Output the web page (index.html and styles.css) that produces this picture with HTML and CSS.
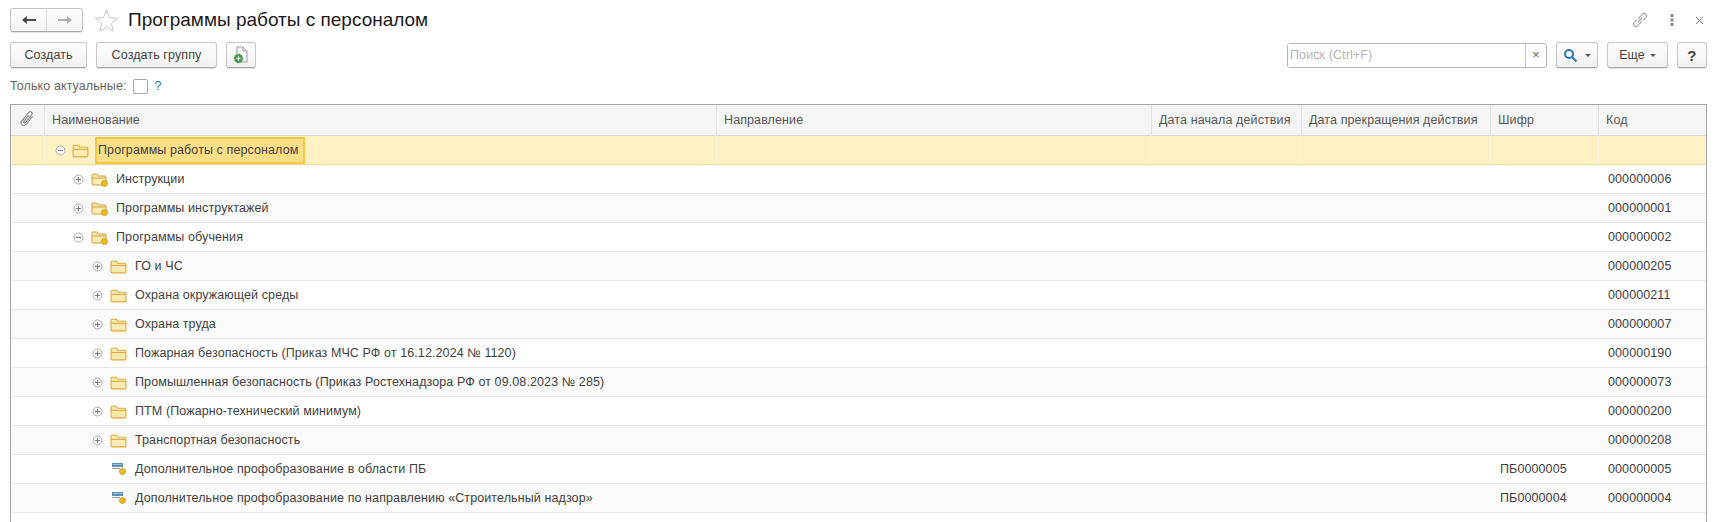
FILE: index.html
```html
<!DOCTYPE html>
<html lang="ru">
<head>
  <meta charset="UTF-8" />
  <title>Программы работы с персоналом</title>
  <link rel="stylesheet" href="styles.css">
</head>
<body>

  <svg class="defs" width="0" height="0">
    <symbol id="plus" viewBox="0 0 11 11">
      <circle cx="5.5" cy="5.5" r="4.5" fill="#fff" stroke="#a8a8a8"/>
      <path d="M3 5.5h5M5.5 3v5" stroke="#777" fill="none"/>
    </symbol>
    <symbol id="minus" viewBox="0 0 11 11">
      <circle cx="5.5" cy="5.5" r="4.5" fill="#fff" stroke="#a8a8a8"/>
      <path d="M3 5.5h5" stroke="#777" fill="none"/>
    </symbol>
    <symbol id="folder" viewBox="0 0 16 14">
      <path d="M1 12V3q0-1 1-1h4l1.5 2H14q1 0 1 1v7q0 1-1 1H2q-1 0-1-1z" fill="#fdeab0" stroke="#dba93c"/>
      <path d="M1 6h14" stroke="#dba93c"/>
    </symbol>
    <symbol id="folder-dot" viewBox="0 0 17 15">
      <path d="M1 12V3q0-1 1-1h4l1.5 2H14q1 0 1 1v7q0 1-1 1H2q-1 0-1-1z" fill="#fdeab0" stroke="#c9a040"/>
      <path d="M1 6h14" stroke="#c9a040"/>
      <circle cx="13.5" cy="11.5" r="3" fill="#eebb1f" stroke="#b98f1c" stroke-width=".7"/>
    </symbol>
    <symbol id="item" viewBox="0 0 14 14">
      <rect x="0" y="1" width="11" height="4" fill="#5f8fb5"/>
      <rect x="1" y="2" width="9" height="1" fill="#9dc0da"/>
      <path d="M0 6.5h8" stroke="#999"/>
      <circle cx="10.5" cy="9.5" r="3" fill="#eebb1f" stroke="#b98f1c" stroke-width=".7"/>
    </symbol>
  </svg>

  <div class="title-bar">
    <div class="nav-btns">
      <button type="button" class="nav-btn">
        <svg width="16" height="10" viewBox="0 0 16 10"><path d="M1 5l5-4v3h9v2H6v3z" fill="#4a4a4a"/></svg>
      </button>
      <button type="button" class="nav-btn">
        <svg width="16" height="10" viewBox="0 0 16 10"><path d="M15 5l-5-4v3H1v2h9v3z" fill="#b0b0b0"/></svg>
      </button>
    </div>
    <svg class="star" width="25" height="25" viewBox="0 0 25 25"><path d="M12.5 2l3 7.6 8 .6-6.200 5.100 2 8L12.500 19l-6.800 4.300 2-8L1.500 10.200l8-.6z" fill="#fff" stroke="#c9c9c9"/></svg>
    <h1>Программы работы с персоналом</h1>
    <div class="window-icons">
      <svg width="18" height="18" viewBox="0 0 18 18" fill="none" stroke="#8a8a8a" stroke-width="1"><path d="M7 11l4-4M6 8.500l-3 3a2.500 2.500 0 0 0 3.500 3.500l3-3a2.500 2.500 0 0 0 .5-2.500M12 9.500l3-3A2.500 2.500 0 0 0 11.500 3l-3 3a2.500 2.500 0 0 0-.5 2.500"/></svg>
      <svg width="4" height="14" viewBox="0 0 4 14" fill="#888"><rect x="0.500" y="1" width="3" height="3"/><rect x="0.500" y="5.500" width="3" height="3"/><rect x="0.500" y="10" width="3" height="3"/></svg>
      <svg width="9" height="9" viewBox="0 0 9 9" stroke="#777" fill="none"><path d="M1 1l7 7M8 1l-7 7"/></svg>
    </div>
  </div>

  <div class="command-bar">
    <button type="button" class="btn btn-create">Создать</button>
    <button type="button" class="btn btn-group">Создать группу</button>
    <button type="button" class="btn btn-icon">
      <svg width="16" height="18" viewBox="0 0 16 18"><path d="M4 1h6l4 4v11H4z" fill="#fff" stroke="#9a9a9a"/><path d="M10 1v4h4" fill="#e8e8e8" stroke="#9a9a9a"/><circle cx="5.500" cy="12.500" r="4.500" fill="#3f9a4c"/><path d="M3 12.500h5M5.500 10v5" stroke="#fff" stroke-width="1.200"/></svg>
    </button>
    <div class="search">
      <input type="text" placeholder="Поиск (Ctrl+F)" />
      <span class="search-clear">×</span>
    </div>
    <button type="button" class="btn btn-search">
      <svg width="15" height="15" viewBox="0 0 15 15" fill="none" stroke="#2a78ad" stroke-width="2"><circle cx="6" cy="6" r="4"/><path d="M9 9l4.500 4.500"/></svg>
      <span class="caret"></span>
    </button>
    <button type="button" class="btn btn-more">Еще <span class="caret"></span></button>
    <button type="button" class="btn btn-help">?</button>
  </div>

  <div class="filter-bar">
    <label for="actual">Только актуальные:</label>
    <input type="checkbox" id="actual" />
    <span class="hint">?</span>
  </div>

  <div class="list-wrap">
    <table class="list">
      <colgroup>
        <col class="col-attach"><col class="col-name"><col class="col-dir"><col class="col-start"><col class="col-end"><col class="col-cipher"><col class="col-code">
      </colgroup>
      <thead>
        <tr>
          <th class="attach">
            <svg width="15" height="17" viewBox="0 0 15 17" fill="none" stroke="#8c8c8c" stroke-width="1.200"><path d="M12.500 6.500l-6 7.500c-1.500 1.800-3.500 1.900-4.600.9s-1-2.800.3-4.400l6-7.500c1-1.200 2.400-1.500 3.300-.8s.8 2-.2 3.200l-5.600 7c-.6.700-1.300.9-1.700.5s-.4-1-.1-1.500l5-6.300"/></svg>
          </th>
          <th>Наименование</th>
          <th>Направление</th>
          <th>Дата начала действия</th>
          <th>Дата прекращения действия</th>
          <th>Шифр</th>
          <th>Код</th>
        </tr>
      </thead>
      <tbody>
        <tr class="selected">
          <td></td>
          <td><div class="tree lvl0"><svg class="toggle"><use href="#minus"/></svg><svg class="ico-folder"><use href="#folder"/></svg><span class="current">Программы работы с персоналом</span></div></td>
          <td></td><td></td><td></td><td></td><td></td>
        </tr>
        <tr>
          <td></td>
          <td><div class="tree lvl1"><svg class="toggle"><use href="#plus"/></svg><svg class="ico-folder"><use href="#folder-dot"/></svg><span>Инструкции</span></div></td>
          <td></td><td></td><td></td><td></td><td>000000006</td>
        </tr>
        <tr>
          <td></td>
          <td><div class="tree lvl1"><svg class="toggle"><use href="#plus"/></svg><svg class="ico-folder"><use href="#folder-dot"/></svg><span>Программы инструктажей</span></div></td>
          <td></td><td></td><td></td><td></td><td>000000001</td>
        </tr>
        <tr>
          <td></td>
          <td><div class="tree lvl1"><svg class="toggle"><use href="#minus"/></svg><svg class="ico-folder"><use href="#folder-dot"/></svg><span>Программы обучения</span></div></td>
          <td></td><td></td><td></td><td></td><td>000000002</td>
        </tr>
        <tr>
          <td></td>
          <td><div class="tree lvl2"><svg class="toggle"><use href="#plus"/></svg><svg class="ico-folder"><use href="#folder"/></svg><span>ГО и ЧС</span></div></td>
          <td></td><td></td><td></td><td></td><td>000000205</td>
        </tr>
        <tr>
          <td></td>
          <td><div class="tree lvl2"><svg class="toggle"><use href="#plus"/></svg><svg class="ico-folder"><use href="#folder"/></svg><span>Охрана окружающей среды</span></div></td>
          <td></td><td></td><td></td><td></td><td>000000211</td>
        </tr>
        <tr>
          <td></td>
          <td><div class="tree lvl2"><svg class="toggle"><use href="#plus"/></svg><svg class="ico-folder"><use href="#folder"/></svg><span>Охрана труда</span></div></td>
          <td></td><td></td><td></td><td></td><td>000000007</td>
        </tr>
        <tr>
          <td></td>
          <td><div class="tree lvl2"><svg class="toggle"><use href="#plus"/></svg><svg class="ico-folder"><use href="#folder"/></svg><span>Пожарная безопасность (Приказ МЧС РФ от 16.12.2024 № 1120)</span></div></td>
          <td></td><td></td><td></td><td></td><td>000000190</td>
        </tr>
        <tr>
          <td></td>
          <td><div class="tree lvl2"><svg class="toggle"><use href="#plus"/></svg><svg class="ico-folder"><use href="#folder"/></svg><span>Промышленная безопасность (Приказ Ростехнадзора РФ от 09.08.2023 № 285)</span></div></td>
          <td></td><td></td><td></td><td></td><td>000000073</td>
        </tr>
        <tr>
          <td></td>
          <td><div class="tree lvl2"><svg class="toggle"><use href="#plus"/></svg><svg class="ico-folder"><use href="#folder"/></svg><span>ПТМ (Пожарно-технический минимум)</span></div></td>
          <td></td><td></td><td></td><td></td><td>000000200</td>
        </tr>
        <tr>
          <td></td>
          <td><div class="tree lvl2"><svg class="toggle"><use href="#plus"/></svg><svg class="ico-folder"><use href="#folder"/></svg><span>Транспортная безопасность</span></div></td>
          <td></td><td></td><td></td><td></td><td>000000208</td>
        </tr>
        <tr>
          <td></td>
          <td><div class="tree lvl2"><span class="toggle"></span><svg class="ico-item"><use href="#item"/></svg><span>Дополнительное профобразование в области ПБ</span></div></td>
          <td></td><td></td><td></td><td>ПБ0000005</td><td>000000005</td>
        </tr>
        <tr>
          <td></td>
          <td><div class="tree lvl2"><span class="toggle"></span><svg class="ico-item"><use href="#item"/></svg><span>Дополнительное профобразование по направлению «Строительный надзор»</span></div></td>
          <td></td><td></td><td></td><td>ПБ0000004</td><td>000000004</td>
        </tr>
      </tbody>
    </table>
  </div>

</body>
</html>
```

FILE: styles.css
```css
* {
  margin: 0;
  padding: 0;
  box-sizing: border-box;
}

html, body {
  height: 100%;
  overflow: hidden;
}

body {
  display: flex;
  flex-direction: column;
  padding: 0 9px 0 10px;
  font-family: "Liberation Sans", Arial, sans-serif;
  font-size: 12.5px;
  letter-spacing: 0.1px;
  color: #3f3f3f;
  background: #fff;
}

.defs {
  position: absolute;
}

/* title */
.title-bar {
  display: flex;
  align-items: center;
  height: 42px;
  padding-bottom: 2px;
}

.nav-btns {
  display: flex;
  width: 73px;
  height: 24px;
  border: 1px solid #c4c4c4;
  border-bottom-color: #a8a8a8;
  border-radius: 3px;
  background: linear-gradient(#fff, #f2f2f2);
  box-shadow: 0 1px 1px rgba(0,0,0,0.12);
}

.nav-btn {
  flex: 1;
  border: none;
  background: none;
  display: flex;
  align-items: center;
  justify-content: center;
}

.nav-btn + .nav-btn {
  border-left: 1px solid #d8d8d8;
}

.star {
  margin-left: 11px;
}

h1 {
  margin-left: 9px;
  font-size: 19px;
  font-weight: normal;
  letter-spacing: 0;
  color: #1a1a1a;
}

.window-icons {
  margin-left: auto;
  display: flex;
  align-items: center;
  gap: 21px;
  padding-right: 3px;
}

/* commands */
.command-bar {
  display: flex;
  align-items: center;
  height: 26px;
}

.btn {
  height: 26px;
  border: 1px solid #c6c6c6;
  border-bottom-color: #a8a8a8;
  border-radius: 3px;
  background: linear-gradient(#fff, #f1f1f1);
  box-shadow: 0 1px 1px rgba(0,0,0,0.12);
  font: inherit;
  letter-spacing: inherit;
  color: #3f3f3f;
  display: flex;
  align-items: center;
  justify-content: center;
}

.btn-create { width: 77px; }
.btn-group { width: 121px; margin-left: 9px; }
.btn-icon { width: 30px; margin-left: 9px; }
.btn-search { width: 42px; margin-left: 9px; gap: 7px; }
.btn-more { width: 61px; margin-left: 9px; gap: 5px; }
.btn-help { width: 30px; margin-left: 9px; font-size: 15px; font-weight: bold; }

.caret {
  width: 0;
  height: 0;
  border-left: 3px solid transparent;
  border-right: 3px solid transparent;
  border-top: 3px solid #555;
}

.search {
  margin-left: auto;
  display: flex;
  width: 260px;
  height: 25px;
  border: 1px solid #b4b4b4;
  border-radius: 3px;
  background: #fff;
}

.search input {
  flex: 1;
  min-width: 0;
  border: none;
  outline: none;
  padding-left: 2px;
  font: inherit;
  letter-spacing: inherit;
}

.search input::placeholder {
  color: #b5b5b5;
}

.search-clear {
  width: 21px;
  border-left: 1px solid #c8c8c8;
  text-align: center;
  line-height: 22px;
  color: #666;
}

/* filter */
.filter-bar {
  display: flex;
  align-items: center;
  height: 22px;
  margin-top: 7px;
  color: #666;
}

.filter-bar input {
  appearance: none;
  width: 15px;
  height: 15px;
  margin-left: 6px;
  border: 1px solid #a8a8a8;
  border-radius: 2px;
  background: #fff;
}

.hint {
  margin-left: 7px;
  color: #2a78ad;
}

/* list */
.list-wrap {
  flex: 1;
  min-height: 0;
  margin-top: 7px;
  overflow: hidden;
  border: 1px solid #a6a6a6;
  border-bottom: none;
}

.list {
  width: 100%;
  table-layout: fixed;
  border-collapse: separate;
  border-spacing: 0;
}

.col-attach { width: 33px; }
.col-name { width: 672px; }
.col-dir { width: 435px; }
.col-start { width: 150px; }
.col-end { width: 189px; }
.col-cipher { width: 108px; }

.list th {
  height: 31px;
  padding-left: 7px;
  background: #f5f5f5;
  border-left: 1px solid #e2e2e2;
  border-bottom: 1px solid #d8d8d8;
  font-weight: normal;
  text-align: left;
  color: #555;
  white-space: nowrap;
  overflow: hidden;
}

.list th:first-child, .list td:first-child {
  border-left: none;
}

.list th.attach {
  padding-left: 9px;
}

.list td {
  height: 29px;
  padding-left: 10px;
  border-bottom: 1px solid #e6e6e6;
  white-space: nowrap;
}

.list tbody tr:nth-child(odd) td {
  background: #fafafa;
}

.list tbody tr.selected td {
  height: 29px;
  background: #fef1c4;
  border-left: 1px solid #fff7dd;
  border-bottom: 1px solid #ead9a0;
}

.tree {
  display: flex;
  align-items: center;
  margin-left: -10px;
}

.lvl0 { padding-left: 10px; }
.lvl1 { padding-left: 29px; }
.lvl2 { padding-left: 48px; }

.toggle {
  flex: none;
  width: 11px;
  height: 11px;
}

.ico-folder {
  flex: none;
  width: 17px;
  height: 15px;
  margin-left: 7px;
  margin-right: 8px;
}

.lvl0 .ico-folder {
  margin-left: 6px;
}

.ico-item {
  flex: none;
  width: 14px;
  height: 14px;
  margin-left: 9px;
  margin-right: 9px;
}

.current {
  margin-left: -2px;
  padding: 0 5px 0 1px;
  line-height: 23px;
  background: #fedf88;
  border: 2px solid #f6c945;
}
```
